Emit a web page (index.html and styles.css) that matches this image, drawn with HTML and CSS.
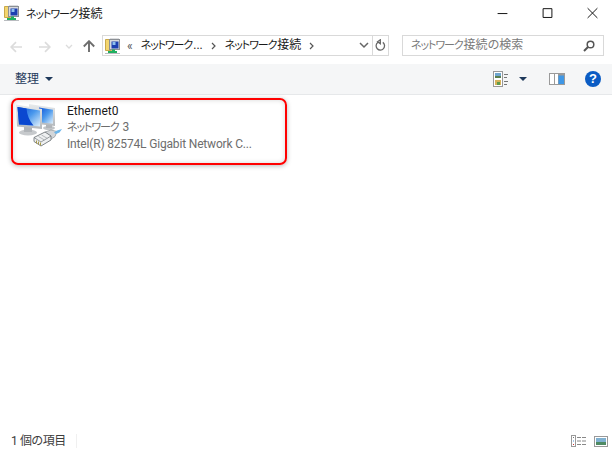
FILE: index.html
```html
<!DOCTYPE html>
<html lang="ja">
<head>
<meta charset="utf-8">
<title>ネットワーク接続</title>
<link rel="stylesheet" href="styles.css">
</head>
<body>
<svg class="defs" width="0" height="0" aria-hidden="true">
  <symbol id="netfolder" viewBox="0 0 16 16">
    <path d="M0.500 1.500h5l1 1v10h-6z" fill="#f3d56f" stroke="#c9a94a" stroke-width="1"/>
    <rect x="5" y="0.500" width="9" height="2" fill="#b9bcc0"/>
    <rect x="4.500" y="1.500" width="10" height="10" fill="#d8dadd" stroke="#8b8f94"/>
    <rect x="6.500" y="3.500" width="7" height="7" fill="#1c3fb0"/>
    <rect x="7.500" y="4" width="3" height="3" fill="#8fc0ee"/>
    <rect x="7" y="11.500" width="3" height="2.500" fill="#20b060"/>
    <rect x="3" y="13" width="9" height="2" fill="#20b060"/>
    <rect x="0" y="15" width="15" height="1" fill="#b9bcc0"/>
  </symbol>
</svg>

<header class="titlebar">
  <svg class="appicon"><use href="#netfolder"/></svg>
  <span class="title"><span class="kana">ネットワーク</span>接続</span>
  <div class="wincontrols">
    <svg class="winbtn" viewBox="0 0 46 32"><path d="M18 13.500h10" stroke="#111" fill="none"/></svg>
    <svg class="winbtn" viewBox="0 0 46 32"><path d="M18.500 8.500h9v9h-9z" stroke="#111" fill="none"/></svg>
    <svg class="winbtn" viewBox="0 0 46 32"><path d="M18 8l10 10M28 8l-10 10" stroke="#111" fill="none"/></svg>
  </div>
</header>

<nav class="navbar">
  <svg class="navbtn" viewBox="0 0 12 12"><path d="M12 6H1.500M6 1.200L1.200 6 6 10.800" stroke="#dcdcdc" stroke-width="1.700" fill="none"/></svg>
  <svg class="navbtn fwd" viewBox="0 0 12 12"><path d="M0 6h10.500M6 1.200L10.800 6 6 10.800" stroke="#dcdcdc" stroke-width="1.700" fill="none"/></svg>
  <svg class="navcaret" viewBox="0 0 8 6"><path d="M1 1l3 3 3-3" stroke="#dcdcdc" stroke-width="1.300" fill="none"/></svg>
  <svg class="navbtn up" viewBox="0 0 12 12"><path d="M6 12V1.500M0.800 6.500L6 1.200l5.200 5.300" stroke="#6d6d6d" stroke-width="1.900" fill="none"/></svg>
  <div class="address">
    <svg class="addricon"><use href="#netfolder"/></svg>
    <span class="crumb-more">«</span>
    <span class="crumb first"><span class="kana">ネットワーク</span>...</span>
    <svg class="chev" viewBox="0 0 5 8"><path d="M1 1l3 3-3 3" stroke="#555" stroke-width="1.200" fill="none"/></svg>
    <span class="crumb"><span class="kana">ネットワーク</span>接続</span>
    <svg class="chev last" viewBox="0 0 5 8"><path d="M1 1l3 3-3 3" stroke="#555" stroke-width="1.200" fill="none"/></svg>
    <svg class="addrdown" viewBox="0 0 10 7"><path d="M1 1l4 4 4-4" stroke="#666" stroke-width="1.500" fill="none"/></svg>
    <div class="refresh">
      <svg viewBox="0 0 12 14" width="11" height="13"><path d="M8.500 3.600A4.600 4.600 0 1 1 3 3.700M5.800 0.800v4.400L2.800 3z" stroke="#666" stroke-width="1.400" fill="none"/></svg>
    </div>
  </div>
  <div class="search">
    <span class="search-text"><span class="kana">ネットワーク</span>接続の検索</span>
    <svg class="search-icon" viewBox="0 0 12 12"><circle cx="7.500" cy="4.500" r="3.300" stroke="#555" stroke-width="1.500" fill="none"/><path d="M5 7l-4 4" stroke="#555" stroke-width="2" fill="none"/></svg>
  </div>
</nav>

<section class="toolbar">
  <span class="organize">整理</span>
  <span class="caret"></span>
  <div class="toolright">
    <svg class="viewicon" viewBox="0 0 16 16">
      <rect x="0.500" y="0.500" width="9" height="15" fill="#fff" stroke="#999"/>
      <rect x="2" y="2" width="6" height="5" fill="#6fa6cf"/><rect x="2" y="5" width="6" height="2" fill="#5b7f4e"/>
      <rect x="2" y="9" width="6" height="5" fill="#d6b35a"/><rect x="4" y="11" width="3" height="3" fill="#5f9a4a"/>
      <path d="M11 3.500h4M11 6.500h3M11 10.500h4M11 13.500h3" stroke="#777"/>
    </svg>
    <span class="caret viewcaret"></span>
    <svg class="paneicon" viewBox="0 0 16 12">
      <rect x="0" y="0" width="16" height="12" fill="#9a9a9a"/>
      <rect x="1" y="1" width="4" height="10" fill="#fff"/><rect x="6" y="1" width="3" height="10" fill="#fff"/>
      <rect x="9.500" y="2.500" width="5.500" height="8.500" fill="#3f97e6"/>
    </svg>
    <span class="help">?</span>
  </div>
</section>

<main class="content">
  <article class="item">
    <svg class="bigicon" viewBox="0 0 46 48">
      <defs>
        <linearGradient id="scr" x1="0" y1="0" x2="1" y2="1"><stop offset="0" stop-color="#0c4fd8"/><stop offset="0.500" stop-color="#4a98ec"/><stop offset="1" stop-color="#e2f1fb"/></linearGradient>
        <linearGradient id="bez" x1="0" y1="0" x2="0" y2="1"><stop offset="0" stop-color="#e8ebed"/><stop offset="1" stop-color="#b4b8bc"/></linearGradient>
      </defs>
      <ellipse cx="33" cy="25" rx="6" ry="2" fill="#c2c5c8"/>
      <path d="M30 20h6v5h-6z" fill="#b0b4b8"/>
      <path d="M13 1l26 4v18l-26-3z" fill="url(#bez)"/>
      <path d="M23 4.500l14 2.300v14l-14-1.500z" fill="url(#scr)"/>
      <ellipse cx="12" cy="29.500" rx="9" ry="3" fill="#c6c9cc"/>
      <path d="M8 23h8v6H8z" fill="#b0b4b8"/>
      <path d="M0 1.500l26 4.500v20L1 23.500z" fill="url(#bez)"/>
      <path d="M1.500 4l22.500 3.500v16L3 21.500z" fill="url(#scr)"/>
      <path d="M1.500 4l9 1.400c0.500 6 2.500 11.500 7 17.200L3 21.500z" fill="#0a48d0"/>
      <path d="M29 29l6-2 6 1.500-2 5-6 4z" fill="#d3d6d9" stroke="#8e9398" stroke-width="0.700"/>
      <path d="M18 34.500l11-5.500 6 4v4l-10 6-7-4.500z" fill="#eef0f1" stroke="#73787d" stroke-width="0.900"/>
      <path d="M18 34.500l7 4.500 10-6" fill="none" stroke="#73787d" stroke-width="0.700"/>
      <path d="M20.500 37.500v3M22.500 38.500v3M24.500 39.500v3" stroke="#a89a4c" stroke-width="1"/>
      <path d="M22.500 33.500l6 3.500M25.500 32l6 3.500" stroke="#a5a9ad" stroke-width="0.800"/>
      <path d="M38 29.500l3-2 5-1.500-2.500 3.500-3.500 1.500z" fill="#6db6ea"/>
    </svg>
    <div class="meta">
      <div class="name">Ethernet0</div>
      <div class="sub"><span class="kana">ネットワーク</span> 3</div>
      <div class="sub">Intel(R) 82574L Gigabit Network C...</div>
    </div>
  </article>
</main>

<footer class="statusbar">
  <span class="count">1 個の項目</span>
  <span class="divider"></span>
  <div class="statusright">
    <svg class="detailsicon" viewBox="0 0 16 12">
      <rect x="0.500" y="0.500" width="4" height="11" fill="#fff" stroke="#999"/>
      <rect x="2" y="2" width="1" height="1" fill="#777"/><rect x="2" y="5.500" width="1" height="1" fill="#4a90d9"/><rect x="2" y="9" width="1" height="1" fill="#c33"/>
      <path d="M6 2.500h4M11 2.500h4M6 6h4M11 6h4M6 9.500h4M11 9.500h4" stroke="#888"/>
    </svg>
    <svg class="tilesicon" viewBox="0 0 14 11">
      <rect x="0.500" y="0.500" width="13" height="10" fill="#fff" stroke="#999"/>
      <rect x="2" y="2" width="10" height="7" fill="#7fb0d0"/>
      <rect x="2" y="6" width="10" height="3" fill="#4f8a63"/>
    </svg>
  </div>
</footer>
</body>
</html>
```
FILE: styles.css
```css
* { box-sizing: border-box; }
html, body { height: 100%; }
body {
  margin: 0;
  height: 450px;
  width: 612px;
  overflow: hidden;
  background: #fff;
  display: flex;
  flex-direction: column;
  font-family: Roboto, "Noto Sans CJK JP", sans-serif;
  font-feature-settings: "palt";
  font-size: 12px;
  color: #1a1a1a;
}
.defs { display: block; height: 0; }
svg { display: block; flex: none; }
.kana { font-size: 11px; letter-spacing: -1.1px; margin-right: 1px; }

.titlebar { height: 32px; display: flex; align-items: flex-start; padding-left: 4px; }
.appicon { width: 16px; height: 16px; margin-top: 5px; }
.title { margin: 5px 0 0 6px; line-height: 18px; }
.wincontrols { margin-left: auto; display: flex; margin-right: -3px; }
.winbtn { width: 45px; height: 32px; }

.navbar { height: 32px; display: flex; align-items: flex-start; padding: 3px 8px 0 10px; }
.navbtn { width: 12px; height: 12px; margin-top: 6px; }
.navbtn.fwd { margin-left: 17px; }
.navcaret { width: 8px; height: 6px; margin: 9px 0 0 14px; }
.navbtn.up { margin: 5px 0 0 10px; }
.address {
  width: 287px; height: 21px; margin-left: 7px;
  border: 1px solid #d9d9d9;
  display: flex; align-items: center;
}
.addricon { width: 16px; height: 16px; margin-left: 2px; }
.crumb-more { margin-left: 6px; line-height: 18px; color: #555; }
.crumb { line-height: 18px; white-space: nowrap; }
.crumb.first { margin-left: 8px; }
.chev { width: 5px; height: 8px; margin: 0 9px 0 8px; }
.chev.last { margin-right: 0; }
.addrdown { width: 10px; height: 7px; margin-left: auto; margin-right: 3px; }
.refresh {
  width: 16px; height: 19px; border-left: 1px solid #d9d9d9;
  display: flex; align-items: center; justify-content: center;
}
.search {
  width: 202px; height: 21px; margin-left: 13px;
  border: 1px solid #d9d9d9;
  display: flex; align-items: center; padding: 0 8px;
}
.search-text { color: #7a7a7a; line-height: 18px; }
.search-icon { width: 12px; height: 12px; margin-left: auto; }

.toolbar {
  height: 31px; background: #f5f6f7; border-bottom: 1px solid #e6e8ea;
  display: flex; align-items: center; padding: 0 11px 0 15px;
}
.organize { line-height: 18px; color: #1e395b; }
.caret {
  width: 0; height: 0; margin-left: 6px;
  border-left: 4px solid transparent; border-right: 4px solid transparent;
  border-top: 4px solid #1e395b;
}
.toolright { margin-left: auto; display: flex; align-items: center; }
.viewicon { width: 16px; height: 16px; }
.caret.viewcaret { margin-left: 10px; }
.paneicon { width: 16px; height: 12px; margin-left: 22px; }
.help {
  width: 16px; height: 16px; margin-left: 20px; border-radius: 50%;
  background: #0b5cc4; color: #fff; font: bold 13px/16px "Liberation Sans", sans-serif;
  text-align: center;
}

.content { flex: 1; padding: 3px 0 0 11px; }
.item {
  width: 276px; height: 67px;
  border: 2px solid #f00; border-radius: 7px;
  box-shadow: 0 1px 5px rgba(0, 0, 0, .28), inset 0 0 5px rgba(0, 0, 0, .16);
  display: flex; padding: 3px 0 0 3px;
}
.bigicon { width: 46px; height: 48px; }
.meta { margin: 0 0 0 5px; line-height: 16px; white-space: nowrap; }
.name { color: #1a1a1a; }
.sub { color: #6d6d6d; letter-spacing: -0.17px; }

.statusbar { height: 22px; display: flex; align-items: center; padding: 4px 4px 0 11px; }
.count { color: #3d3d3d; line-height: 18px; letter-spacing: -0.4px; }
.divider { width: 1px; height: 14px; background: #f0f0f0; margin-left: 10px; }
.statusright { margin-left: auto; display: flex; align-items: center; }
.detailsicon { width: 16px; height: 12px; }
.tilesicon { width: 14px; height: 11px; margin-left: 7px; }
```
